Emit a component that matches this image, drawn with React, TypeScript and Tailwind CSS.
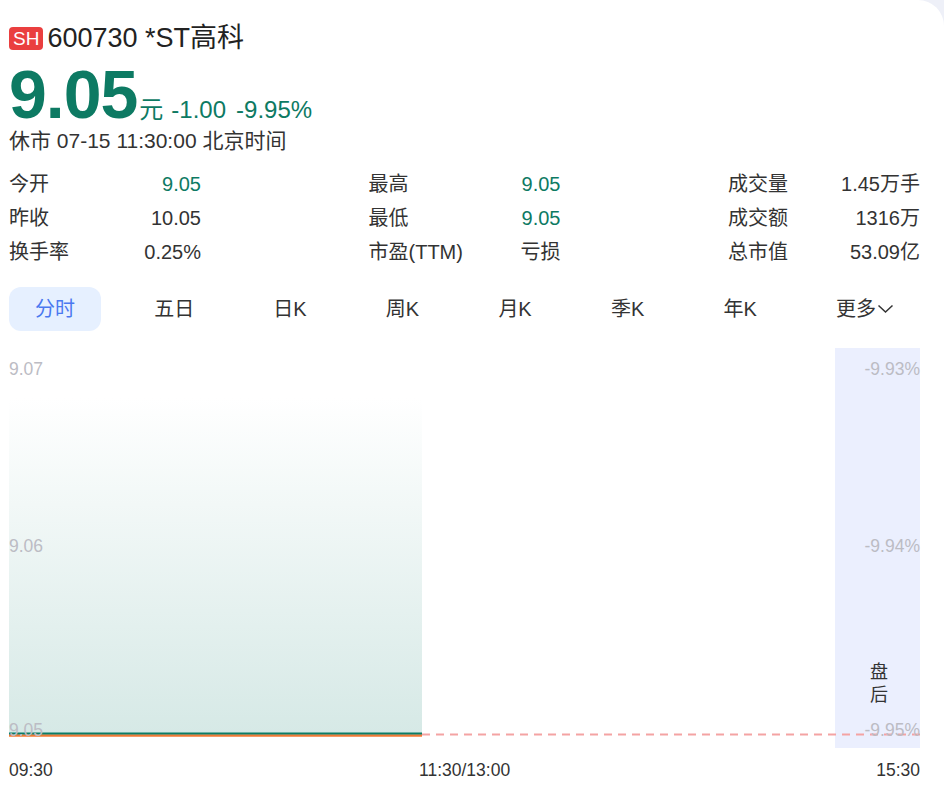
const stats = [
  [
    { label: '今开', value: '9.05', green: true },
    { label: '昨收', value: '10.05' },
    { label: '换手率', value: '0.25%' },
  ],
  [
    { label: '最高', value: '9.05', green: true },
    { label: '最低', value: '9.05', green: true },
    { label: '市盈(TTM)', value: '亏损' },
  ],
  [
    { label: '成交量', value: '1.45万手' },
    { label: '成交额', value: '1316万' },
    { label: '总市值', value: '53.09亿' },
  ],
];

const tabs = ['分时', '五日', '日K', '周K', '月K', '季K', '年K'];

function StatGroup({ rows }: { rows: { label: string; value: string; green?: boolean }[] }) {
  return (
    <div className="w-[192px] flex flex-col">
      {rows.map((r) => (
        <div key={r.label} className="flex justify-between items-center h-[34px]">
          <span>{r.label}</span>
          <span className={r.green ? 'text-[#0d7a63]' : ''}>{r.value}</span>
        </div>
      ))}
    </div>
  );
}

function Chart() {
  return (
    <div className="relative h-[400px] mt-[17px] text-[17.5px] leading-[20px] text-[#bcbcc4]">
      {/* after-hours band */}
      <div className="absolute right-0 top-0 bottom-0 w-[85px] bg-[#ebeffe]" />
      {/* area fill for morning session */}
      <div className="absolute left-0 top-[50px] w-[413px] h-[336px] bg-gradient-to-b from-white to-[#d6e9e6]" />
      <svg className="absolute left-0 top-0" width="911" height="400">
        <line x1="413" y1="386.5" x2="911" y2="386.5" stroke="#f4a3a3" strokeWidth="2" strokeDasharray="8 6" />
        <line x1="0" y1="387.5" x2="413" y2="387.5" stroke="#f07a36" strokeWidth="2.5" />
        <line x1="0" y1="385.5" x2="413" y2="385.5" stroke="#0b7c66" strokeWidth="2" />
      </svg>
      <div className="absolute left-0 top-[11px]">9.07</div>
      <div className="absolute left-0 top-[188px]">9.06</div>
      <div className="absolute left-0 top-[372px]">9.05</div>
      <div className="absolute right-0 top-[11px]">-9.93%</div>
      <div className="absolute right-0 top-[188px]">-9.94%</div>
      <div className="absolute right-0 top-[372px]">-9.95%</div>
      <div className="absolute right-[32px] top-[313px] w-[18px] text-[18px] leading-[23px] text-[#333]">
        盘后
      </div>
    </div>
  );
}

export default function App() {
  return (
    <div className="w-[944px] h-[795px] bg-[#eef0f8] overflow-hidden">
      <div
        className="h-full bg-white rounded-tr-[26px] pl-[9px] pr-[24px] pt-[21px] text-[#333]"
        style={{ fontFamily: '"Liberation Sans", Arial, "Noto Sans CJK SC", sans-serif' }}
      >
        {/* Header */}
        <div className="flex items-center h-[34px]">
          <span className="bg-[#ea3f3f] text-white text-[19px] leading-[23px] px-[4px] rounded-[4px]">SH</span>
          <span className="ml-[4px] text-[27px] leading-[32px] text-[#222]">600730 *ST高科</span>
        </div>

        <div className="flex items-baseline mt-[8px] h-[62px] text-[#0d7a63]">
          <span className="text-[68px] leading-[62px] font-bold tracking-[-1px]">9.05</span>
          <span className="text-[24px] ml-[2px]">元</span>
          <span className="text-[24px] ml-[8px]">-1.00</span>
          <span className="text-[24px] ml-[10px]">-9.95%</span>
        </div>

        <div className="text-[21px] leading-[26px] mt-[3px]">休市 07-15 11:30:00 北京时间</div>

        {/* Stats */}
        <div className="flex justify-between text-[20px] mt-[13px]">
          {stats.map((g, i) => (
            <StatGroup key={i} rows={g} />
          ))}
        </div>

        {/* Tabs */}
        <div className="flex justify-between items-center mt-[18px] text-[20px]">
          {tabs.map((t, i) => (
            <div
              key={t}
              className={
                i === 0
                  ? 'h-[44px] px-[26px] flex items-center rounded-[12px] bg-[#e6f0ff] text-[#4a78f0]'
                  : 'h-[44px] px-[26px] flex items-center'
              }
            >
              {t}
            </div>
          ))}
          <div className="h-[44px] pl-[26px] pr-[26px] flex items-center">
            更多
            <svg width="17" height="10" viewBox="0 0 17 10" className="ml-[1px]">
              <polyline points="1.5,1.5 8.5,8 15.5,1.5" fill="none" stroke="#333" strokeWidth="1.5" />
            </svg>
          </div>
        </div>

        <Chart />

        {/* Time axis */}
        <div className="flex text-[17.5px] leading-[20px] mt-[12px]">
          <span className="w-[410px]">09:30</span>
          <span>11:30/13:00</span>
          <span className="ml-auto">15:30</span>
        </div>
      </div>
    </div>
  );
}
